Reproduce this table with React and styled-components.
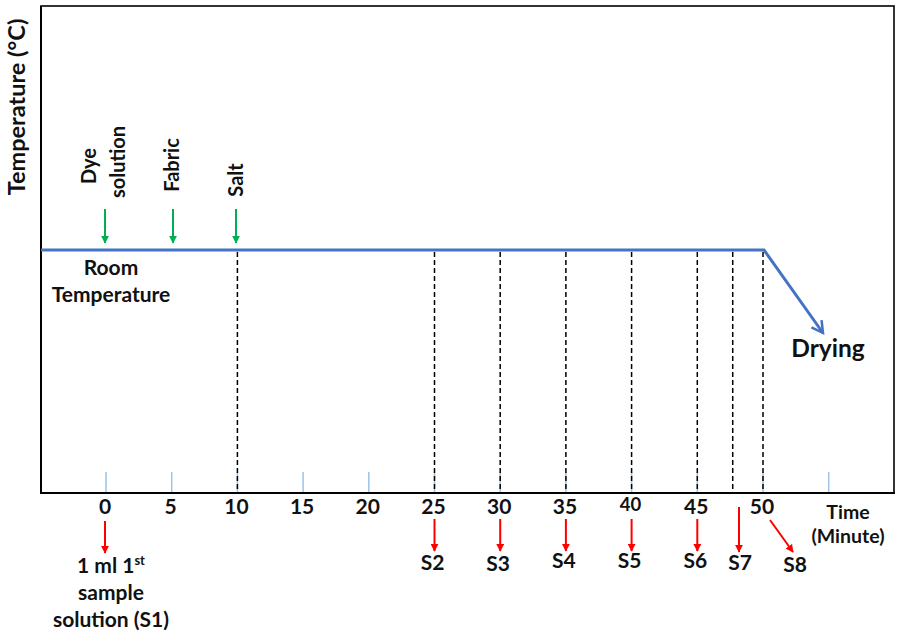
import React from 'react'
import styled, { createGlobalStyle } from 'styled-components'

const GlobalStyle = createGlobalStyle`
  html, body { margin: 0; padding: 0; background: #fff; }
  body { font-family: Lato, "Liberation Sans", sans-serif; }
`

const Page = styled.div`
  width: 902px;
  height: 639px;
  background: #fff;
`

const Chart = styled.svg`
  display: block;
  width: 902px;
  height: 639px;
`

const Label = styled.text`
  font-family: Lato, "Liberation Sans", sans-serif;
  font-weight: 700;
  font-size: ${p => p.$size || 21}px;
  fill: #111;
  text-anchor: ${p => p.$anchor || 'middle'};
`

const Sup = styled.tspan`
  font-size: 13px;
`

const BLUE = '#4472c4'
const GREEN = '#00b050'
const RED = '#ff0000'

const x0 = 106
const step = 65.7
const tx = t => x0 + t * step / 5
const AXIS_Y = 493
const LINE_Y = 250

const ticks = [0, 5, 10, 15, 20, 25, 30, 35, 40, 45, 50, 55]
const dashed = [10, 25, 30, 35, 40, 45, 48, 50]

const samples = [
  { t: 25, label: 'S2', y: 570 },
  { t: 30, label: 'S3', y: 571 },
  { t: 35, label: 'S4', y: 568 },
  { t: 40, label: 'S5', y: 568 },
  { t: 45, label: 'S6', y: 568 },
]

const Arrow = ({ x1, y1, x2, y2, color, head = 'arrowRed' }) => (
  <line x1={x1} y1={y1} x2={x2} y2={y2} stroke={color} strokeWidth="2" markerEnd={`url(#${head})`} />
)

export default function App() {
  return (
    <Page>
      <GlobalStyle />
      <Chart viewBox="0 0 902 639">
        <defs>
          <marker id="arrowRed" viewBox="0 0 10 10" refX="9" refY="5" markerWidth="4" markerHeight="4" orient="auto">
            <path d="M0 0 L10 5 L0 10 z" fill={RED} />
          </marker>
          <marker id="arrowGreen" viewBox="0 0 10 10" refX="9" refY="5" markerWidth="4" markerHeight="4" orient="auto">
            <path d="M0 0 L10 5 L0 10 z" fill={GREEN} />
          </marker>
          <marker id="arrowBlue" viewBox="0 0 12 12" refX="10" refY="6" markerWidth="5" markerHeight="5" orient="auto">
            <path d="M1 1 L10 6 L1 11" fill="none" stroke={BLUE} strokeWidth="2" />
          </marker>
        </defs>

        {/* frame */}
        <rect x="41" y="6" width="853" height="487" fill="none" stroke="#000" strokeWidth="1.6" />
        <line x1="40" y1={AXIS_Y} x2="895" y2={AXIS_Y} stroke="#000" strokeWidth="2.2" />
        <line x1="41" y1="6" x2="41" y2={AXIS_Y} stroke="#000" strokeWidth="2" />

        {/* ticks */}
        {ticks.map(t => (
          <line key={t} x1={tx(t)} y1="472" x2={tx(t)} y2={AXIS_Y - 1} stroke="#9dc3e6" strokeWidth="1.5" />
        ))}

        {/* dashed guides */}
        {dashed.map(t => (
          <line key={t} x1={tx(t) - (t === 48 ? 4 : 0)} y1={LINE_Y + 2} x2={tx(t) - (t === 48 ? 4 : 0)} y2={AXIS_Y}
            stroke="#000" strokeWidth="1.5" strokeDasharray="5 3" />
        ))}

        {/* temperature profile */}
        <polyline points={`41,${LINE_Y} ${tx(50) + 1},${LINE_Y} 823,333`} fill="none" stroke={BLUE} strokeWidth="3"
          markerEnd="url(#arrowBlue)" />

        {/* y axis title */}
        <Label $size={23.5} transform="translate(25,107) rotate(-90)">Temperature (°C)</Label>

        {/* additions */}
        <Label $size={20} transform="translate(96,166) rotate(-90)">Dye</Label>
        <Label $size={20} transform="translate(125,162) rotate(-90)">solution</Label>
        <Label $size={20} transform="translate(179,165) rotate(-90)">Fabric</Label>
        <Label $size={20} transform="translate(243,180) rotate(-90)">Salt</Label>
        <Arrow x1={105} y1={209} x2={105} y2={243} color={GREEN} head="arrowGreen" />
        <Arrow x1={173} y1={209} x2={173} y2={243} color={GREEN} head="arrowGreen" />
        <Arrow x1={236} y1={209} x2={236} y2={243} color={GREEN} head="arrowGreen" />

        <Label x="111" y="275">Room</Label>
        <Label x="111" y="302">Temperature</Label>
        <Label $size={24.5} x="828" y="357">Drying</Label>

        {/* tick labels */}
        {ticks.slice(0, 11).map(t => (
          <Label key={t} $size={t === 40 ? 18.5 : 21} x={tx(t) - 1} y={t === 40 ? 511 : 514}>{t}</Label>
        ))}
        <Label $size={19.5} x="848" y="519">Time</Label>
        <Label $size={19.5} x="848" y="543">(Minute)</Label>

        {/* samples */}
        <Arrow x1={105} y1={521} x2={105} y2={553} color={RED} />
        <Label x="111" y="573">1 ml 1<Sup dy="-8">st</Sup></Label>
        <Label x="111" y="600">sample</Label>
        <Label x="111" y="627">solution (S1)</Label>

        {samples.map(s => (
          <g key={s.label}>
            <Arrow x1={tx(s.t)} y1={519} x2={tx(s.t)} y2={551} color={RED} />
            <Label x={tx(s.t) - 2} y={s.y}>{s.label}</Label>
          </g>
        ))}
        <Arrow x1={739} y1={507} x2={739} y2={552} color={RED} />
        <Label x="740" y="570">S7</Label>
        <Arrow x1={770} y1={520} x2={793} y2={552} color={RED} />
        <Label x="795" y="572">S8</Label>
      </Chart>
    </Page>
  )
}
